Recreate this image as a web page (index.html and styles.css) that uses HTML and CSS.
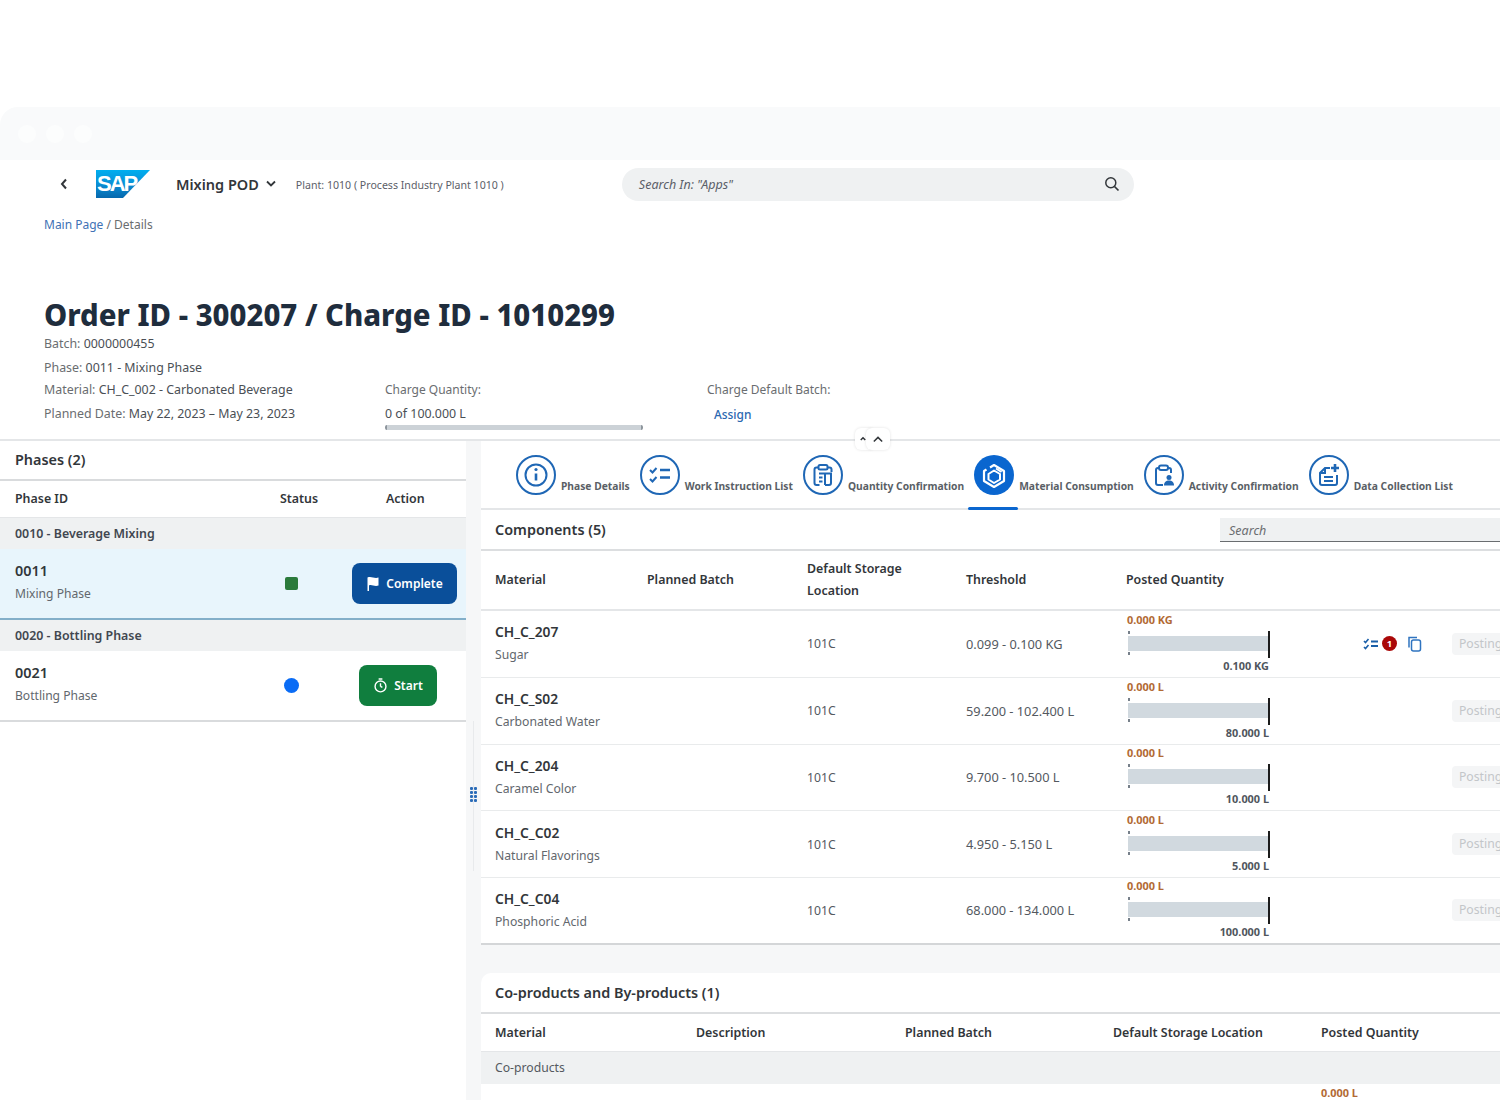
FILE: index.html
```html
<!DOCTYPE html>
<html lang="en">
<head>
<meta charset="utf-8">
<title>Mixing POD</title>
<link rel="stylesheet" href="styles.css">
</head>
<body>
<div class="page">
  <div class="top-space"></div>
  <div class="chrome"><i></i><i></i><i></i></div>
  <header class="shell">
    <svg class="back" viewBox="0 0 10 12" width="10" height="12"><path d="M7 1.500 3 6l4 4.500" fill="none" stroke="#32363a" stroke-width="2"/></svg>
    <svg class="logo" viewBox="0 0 54 28" width="54" height="28"><defs><linearGradient id="sapg" x1="0" y1="0" x2="0" y2="1"><stop offset="0" stop-color="#00aeef"/><stop offset=".5" stop-color="#0a8fd6"/><stop offset="1" stop-color="#0668ad"/></linearGradient></defs><path d="M0 0h54L27 28H0z" fill="url(#sapg)"/><text x="1" y="21" class="logo-text">SAP</text></svg>
    <div class="app-title">Mixing POD</div>
    <svg class="caret" viewBox="0 0 10 8" width="10" height="8"><path d="M1 1.500 5 5.500l4-4" fill="none" stroke="#32363a" stroke-width="1.800"/></svg>
    <div class="plant">Plant: 1010 ( Process Industry Plant 1010 )</div>
    <div class="shell-search">
      <span>Search In: "Apps"</span>
      <svg viewBox="0 0 16 16" width="16" height="16"><circle cx="6.800" cy="6.800" r="5" fill="none" stroke="#32363a" stroke-width="1.500"/><path d="m10.500 10.500 4 4" stroke="#32363a" stroke-width="1.700"/></svg>
    </div>
  </header>
  <nav class="crumbs"><a>Main Page</a> / Details</nav>
  <section class="object">
    <h1>Order ID - 300207 / Charge ID - 1010299</h1>
    <div class="meta batch"><span>Batch:</span> 0000000455</div>
    <div class="meta phase"><span>Phase:</span> 0011 - Mixing Phase</div>
    <div class="meta-grid">
      <div class="meta"><span>Material:</span> CH_C_002 - Carbonated Beverage</div>
      <div class="meta label"><span>Charge Quantity:</span></div>
      <div class="meta label"><span>Charge Default Batch:</span></div>
      <div class="meta"><span>Planned Date:</span> May 22, 2023 – May 23, 2023</div>
      <div class="meta qty">0 of 100.000 L<div class="qty-bar"></div></div>
      <div class="meta assign"><a>Assign</a></div>
    </div>
  </section>
  <div class="collapse">
    <span class="mini"><svg viewBox="0 0 8 6" width="6" height="5"><path d="M1 5l3-3 3 3" fill="none" stroke="#32363a" stroke-width="2"/></svg></span>
    <span class="mini front"><svg viewBox="0 0 12 8" width="10" height="7"><path d="M1 6.500l5-5 5 5" fill="none" stroke="#32363a" stroke-width="1.800"/></svg></span>
  </div>
  <main class="workspace">
    <aside class="phases">
      <div class="panel-title">Phases (2)</div>
      <div class="ph-head"><span>Phase ID</span><span>Status</span><span>Action</span></div>
      <div class="ph-group">0010 - Beverage Mixing</div>
      <div class="ph-row selected">
        <div class="ph-name"><b>0011</b><small>Mixing Phase</small></div>
        <i class="ind green"></i>
        <button class="btn blue"><svg viewBox="0 0 14 16" width="14" height="16"><path d="M1.500 1.500c4-1.500 7 1.500 11 0v8c-4 1.500-7-1.500-9.500 0V15H1.500z" fill="#fff"/></svg>Complete</button>
      </div>
      <div class="ph-group">0020 - Bottling Phase</div>
      <div class="ph-row">
        <div class="ph-name"><b>0021</b><small>Bottling Phase</small></div>
        <i class="ind dot"></i>
        <button class="btn start"><svg viewBox="0 0 16 16" width="15" height="15"><circle cx="8" cy="9" r="5.800" fill="none" stroke="#fff" stroke-width="1.500"/><path d="M6 1h4M8 9V5.500M8 9l2 1" stroke="#fff" stroke-width="1.500" fill="none"/></svg>Start</button>
      </div>
    </aside>
    <div class="splitter"><div class="grip"><i></i><i></i><i></i><i></i><i></i><i></i><i></i><i></i></div></div>
    <div class="detail">
      <div class="tabs">
        <div class="tab"><svg viewBox="0 0 40 40" width="40" height="40"><circle cx="20" cy="20" r="19" class="ring"/><circle cx="20" cy="20" r="10.500" class="ln thick"/><path d="M20 18.500v7" class="ln thicker"/><circle cx="20" cy="14.500" r="1.600" fill="#1f67b5"/></svg><span>Phase Details</span></div>
        <div class="tab"><svg viewBox="0 0 40 40" width="40" height="40"><circle cx="20" cy="20" r="19" class="ring"/><path d="m10 15 2.500 2.500 4-4.500M10 24l2.500 2.500 4-4.500" class="ln thick"/><path d="M20 15h10M20 22.500h10" class="ln thicker"/></svg><span>Work Instruction List</span></div>
        <div class="tab"><svg viewBox="0 0 40 40" width="40" height="40"><circle cx="20" cy="20" r="19" class="ring"/><path d="M15 12.500h-1.500a2 2 0 0 0-2 2V28a2 2 0 0 0 2 2h3M25 12.500h1.500a2 2 0 0 1 2 2v2.500" class="ln thick"/><rect x="15.500" y="10" width="9" height="4.500" rx="1.500" class="ln thick"/><path d="M16 18.500h13M16 22.500h3.500M16 26.500h3.500M22 18.500V30M28 18.500V28a2 2 0 0 1-2 2h-4" class="ln thick"/></svg><span>Quantity Confirmation</span></div>
        <div class="tab active"><svg viewBox="0 0 40 40" width="40" height="40"><circle cx="20" cy="20" r="20" fill="#0a66cf"/><path d="M16 12.500 20 10l10 6v10l-10 6-10-6v-10l2.500-1.500" fill="none" stroke="#fff" stroke-width="2.200" stroke-linejoin="round"/><path d="M20 15.500 26 19v5.500l-6 3.500-5.500-3.500V19zM22 13.500l5.500 3.500" fill="none" stroke="#fff" stroke-width="2" stroke-linejoin="round"/></svg><span>Material Consumption</span></div>
        <div class="tab"><svg viewBox="0 0 40 40" width="40" height="40"><circle cx="20" cy="20" r="19" class="ring"/><path d="M15 13h-1a2 2 0 0 0-2 2v13a2 2 0 0 0 2 2h5M24 13h1a2 2 0 0 1 2 2v3" class="ln thick"/><rect x="15" y="10.500" width="9" height="4.500" rx="2" class="ln thick"/><circle cx="25" cy="22.500" r="2.500" fill="#1f67b5"/><path d="M20 30.500c0-3.500 2-5 5-5s5 1.500 5 5z" fill="#1f67b5"/></svg><span>Activity Confirmation</span></div>
        <div class="tab"><svg viewBox="0 0 40 40" width="40" height="40"><circle cx="20" cy="20" r="19" class="ring"/><path d="M21 13h-5l-5 5v10a2 2 0 0 0 2 2h13a2 2 0 0 0 2-2V20" class="ln thick"/><path d="M16 13v5h-5" class="ln thick"/><path d="M15 22h9M15 26h9" class="ln thick"/><path d="M26 9v8M22 13h8" class="ln thicker"/></svg><span>Data Collection List</span></div>
      </div>
      <div class="cmp-title"><h2>Components (5)</h2><div class="search">Search</div></div>
      <div class="cmp-head"><span>Material</span><span>Planned Batch</span><span>Default Storage<br>Location</span><span>Threshold</span><span>Posted Quantity</span></div>
      <div class="cmp-row">
        <div class="name"><b>CH_C_207</b><small>Sugar</small></div><div></div><div>101C</div><div class="range">0.099 - 0.100 KG</div>
        <div class="posted"><em>0.000 KG</em><div class="bar"></div><strong>0.100 KG</strong></div>
        <div class="tools">
          <svg viewBox="0 0 16 12" width="16" height="12"><path d="m1 3 1.500 1.500L5.500 1M1 9l1.500 1.500L5.500 7" class="ln2"/><path d="M8 3.500h7M8 8h7" class="ln2 wide"/></svg>
          <i class="badge">1</i>
          <svg class="copy" viewBox="0 0 16 16" width="16" height="16"><path d="M3 11.500V1.500h8" class="ln2 soft"/><rect x="5.500" y="4" width="9" height="11" rx="2" class="ln2 soft"/></svg>
        </div>
        <div class="post">Posting</div>
      </div>
      <div class="cmp-row">
        <div class="name"><b>CH_C_S02</b><small>Carbonated Water</small></div><div></div><div>101C</div><div class="range">59.200 - 102.400 L</div>
        <div class="posted"><em>0.000 L</em><div class="bar"></div><strong>80.000 L</strong></div>
        <div class="tools"></div><div class="post">Posting</div>
      </div>
      <div class="cmp-row">
        <div class="name"><b>CH_C_204</b><small>Caramel Color</small></div><div></div><div>101C</div><div class="range">9.700 - 10.500 L</div>
        <div class="posted"><em>0.000 L</em><div class="bar"></div><strong>10.000 L</strong></div>
        <div class="tools"></div><div class="post">Posting</div>
      </div>
      <div class="cmp-row">
        <div class="name"><b>CH_C_C02</b><small>Natural Flavorings</small></div><div></div><div>101C</div><div class="range">4.950 - 5.150 L</div>
        <div class="posted"><em>0.000 L</em><div class="bar"></div><strong>5.000 L</strong></div>
        <div class="tools"></div><div class="post">Posting</div>
      </div>
      <div class="cmp-row last">
        <div class="name"><b>CH_C_C04</b><small>Phosphoric Acid</small></div><div></div><div>101C</div><div class="range">68.000 - 134.000 L</div>
        <div class="posted"><em>0.000 L</em><div class="bar"></div><strong>100.000 L</strong></div>
        <div class="tools"></div><div class="post">Posting</div>
      </div>
      <div class="coprod">
        <h2>Co-products and By-products (1)</h2>
        <div class="co-head"><span>Material</span><span>Description</span><span>Planned Batch</span><span>Default Storage Location</span><span>Posted Quantity</span></div>
        <div class="co-group">Co-products</div>
        <div class="co-row"><em>0.000 L</em></div>
      </div>
    </div>
  </main>
</div>
</body>
</html>
```
FILE: styles.css
```css
* { box-sizing: border-box; }
html, body { margin: 0; height: 1100px; overflow: hidden; background: #fff; }
body { font-family: "Noto Sans", "Open Sans", sans-serif; color: #32363a; font-size: 12.500px; }
.page { width: 1500px; height: 1100px; overflow: hidden; position: relative; }
.top-space { height: 107px; }
.chrome { height: 53px; background: #f9fafb; border-top-left-radius: 18px; display: flex; align-items: center; gap: 10px; padding-left: 18px; }
.chrome i { width: 18px; height: 18px; border-radius: 50%; background: #fcfdfd; }

.shell { height: 48px; display: flex; align-items: center; padding-left: 59px; }
.back { margin-right: 27px; }
.logo { margin-right: 26px; }
.logo-text { font: bold 22px "Liberation Sans", sans-serif; fill: #fff; letter-spacing: -2px; }
.app-title { font-size: 14.500px; font-weight: 600; color: #32363a; }
.caret { margin: 0 21px 0 7px; }
.plant { font-size: 10.600px; color: #5b6068; width: 326px; padding-top: 1px; margin-left: -1px; }
.shell-search { width: 512px; height: 33px; border-radius: 17px; background: #eff1f2; display: flex; align-items: center; justify-content: space-between; padding: 0 14px 0 17px; font-style: italic; color: #5b6068; font-size: 12.500px; }

.crumbs { padding-left: 44px; height: 34px; line-height: 34px; font-size: 12px; color: #6a6d70; }
.crumbs a { color: #3f72b5; }

.object { padding: 53px 0 0 44px; height: 197px; }
h1 { margin: 0 0 -4px; font-size: 29.300px; line-height: 40px; font-weight: 800; color: #1f2d3d; height: 40px; }
.meta { font-size: 12.400px; line-height: 23px; color: #4a4f55; }
.meta span { color: #6a6d70; }
.meta.label { font-size: 12px; }
.batch { margin-top: 1px; height: 24px; }
.phase { height: 22px; }
.meta-grid { display: grid; grid-template-columns: 341px 322px 1fr; grid-auto-rows: 24px; }
.qty-bar { width: 258px; height: 5px; background: #ccd2d7; border-radius: 2px; border-left: 2px solid #8d959c; border-right: 2px solid #8d959c; }
.assign { padding-left: 7px; padding-top: 1px; }
.assign a { color: #2a67b0; font-weight: 500; font-size: 11.900px; }

.collapse { position: absolute; left: 855px; top: 428px; display: flex; z-index: 2; }
.mini { width: 20px; height: 22px; background: #fff; border-radius: 6px; display: flex; align-items: center; justify-content: center; box-shadow: 0 0 3px rgba(0,0,0,.12); }
.mini:first-child { margin-right: -9px; align-items: flex-start; padding-top: 8px; padding-right: 5px; }
.mini.front { position: relative; width: 24px; }

.workspace { display: flex; height: 661px; background: #f6f7f8; border-top: 2px solid #e4e6e8; overflow: hidden; }
.phases { width: 466px; flex: none; background: #fff; height: 100%; }
.panel-title { height: 40px; line-height: 38px; padding-left: 15px; font-size: 14.400px; font-weight: 600; border-bottom: 2px solid #d9dbdd; }
.ph-head { height: 37px; display: grid; grid-template-columns: 265px 106px 1fr; padding: 0 0 2px 15px; align-items: center; font-size: 12.400px; font-weight: 600; border-bottom: 1px solid #e4e6e8; }
.ph-group { height: 31px; line-height: 31px; padding-left: 15px; font-size: 12.400px; font-weight: 600; color: #414750; background: #eff1f2; }
.ph-row { height: 71px; display: grid; grid-template-columns: 270px 67px 1fr; padding: 0 9px 0 15px; align-items: center; background: #fff; border-bottom: 2px solid #d9dbdd; }
.ph-row.selected { background: #e8f5fc; border-bottom-color: #83afc9; }
.ph-name { margin-bottom: 2px; }
.ph-row b { display: block; font-size: 14.400px; font-weight: 600; line-height: 22px; }
.ph-row small { display: block; font-size: 12.100px; line-height: 22px; margin-top: 1px; color: #62676d; }
.ind { display: block; width: 13px; height: 13px; }
.ind.green { background: #2b7a3b; border-radius: 2px; }
.ind.dot { background: #0a6cf5; border-radius: 50%; width: 15px; height: 15px; margin-left: -1px; }
.btn { border: 0; display: inline-flex; align-items: center; justify-content: center; gap: 6px; height: 41px; border-radius: 8px; color: #fff; font: 600 12px "Noto Sans", sans-serif; }
.btn.blue { width: 105px; background: #0a4f9a; }
.btn.start { width: 78px; background: #107e3e; margin-left: 7px; }

.splitter { width: 15px; flex: none; height: 100%; position: relative; }
.splitter::before { content: ""; position: absolute; left: 7px; top: 280px; height: 150px; width: 1px; background: #e8eaec; }
.grip { position: absolute; left: 4px; top: 346px; width: 7px; display: grid; grid-template-columns: 3px 3px; gap: 1px; }
.grip i { width: 3px; height: 3px; background: #2b6cb8; border-radius: 1px; }

.detail { width: 1019px; flex: none; background: #f6f7f8; }
.tabs { height: 69px; background: #fff; display: flex; gap: 10px; padding: 14px 0 0 35px; border-bottom: 2px solid #e4e6e8; }
.tab { display: flex; align-items: flex-start; gap: 5px; height: 40px; position: relative; }
.tab span { font-size: 10.270px; font-weight: 700; color: #5a5f66; line-height: 13px; margin-top: 25px; white-space: nowrap; }
.tab svg { flex: none; }
.tab.active::after { content: ""; position: absolute; left: -6px; width: 50px; top: 52px; height: 3px; background: #0a66cf; border-radius: 2px; }
.ring { fill: none; stroke: #1f67b5; stroke-width: 2; }
.ln { fill: none; stroke: #1f67b5; stroke-width: 1.500; }
.thick { stroke-width: 2; }
.thicker { stroke-width: 2.600; }
.ln2 { fill: none; stroke: #1a5fa8; stroke-width: 1.600; }
.wide { stroke-width: 2; }
.soft { stroke: #2f74c0; stroke-width: 1.500; }

.cmp-title { height: 41px; background: #fff; border-bottom: 2px solid #dcdee0; display: flex; align-items: center; justify-content: space-between; padding-left: 14px; }
h2 { margin: 0; font-size: 14.400px; font-weight: 600; color: #32363a; }
.search { width: 280px; height: 24px; margin-top: 1px; background: #eff1f2; border-bottom: 1px solid #6a6d70; padding-left: 9px; line-height: 25px; font-style: italic; color: #6a6d70; font-size: 12.500px; }
.cmp-head, .cmp-row { display: grid; grid-template-columns: 152px 160px 159px 160px 236px 90px 60px; padding-left: 14px; background: #fff; align-items: center; }
.cmp-head { height: 60px; font-size: 12.400px; font-weight: 600; line-height: 22px; border-bottom: 2px solid #e4e6e8; }
.cmp-row { height: 66.750px; font-size: 12.200px; color: #54595f; border-bottom: 1px solid #e9ebec; overflow: hidden; }
.cmp-row.last { border-bottom: 2px solid #d4d6d8; }
.range { font-size: 12.800px; }
.name b { display: block; font-size: 13.800px; font-weight: 600; line-height: 22px; color: #32363a; }
.name small { display: block; font-size: 12.200px; line-height: 22px; margin-top: 1px; color: #62676d; }
.posted { width: 144px; position: relative; height: 62px; }
.posted em, .co-row em { font-style: normal; font-weight: 700; font-size: 10.900px; color: #b26a34; }
.posted em { position: absolute; left: 1px; top: 0; line-height: 13px; }
.bar { position: absolute; left: 2px; right: 0; top: 23px; height: 15px; background: #d1d9df; }
.bar::after { content: ""; position: absolute; right: 0; top: -5px; height: 27px; width: 2px; background: #1c1c1c; }
.bar::before { content: ""; position: absolute; left: 0; top: -5px; height: 24px; width: 2px; background: linear-gradient(#77808a 3px, transparent 3px, transparent 21px, #77808a 21px); }
.posted strong { position: absolute; right: 1px; top: 46px; font-size: 10.900px; line-height: 13px; font-weight: 700; color: #50565d; }
.tools { display: flex; align-items: center; margin-left: 1px; }
.badge { width: 15px; height: 15px; margin-left: 3px; border-radius: 50%; background: #aa0808; color: #fff; font: 700 9.500px/15px "Noto Sans", sans-serif; text-align: center; }
.copy { margin-left: 9px; }
.post { width: 70px; height: 22px; line-height: 22px; padding-left: 7px; background: #f4f5f6; border-radius: 4px; color: #c3c6c9; font-size: 12.200px; }

.coprod { margin-top: 28px; background: #fff; border-top-left-radius: 10px; }
.coprod h2 { height: 41px; line-height: 40px; padding-left: 14px; border-bottom: 2px solid #dcdee0; }
.co-head { height: 38px; display: grid; grid-template-columns: 201px 209px 208px 208px 1fr; padding-left: 14px; align-items: center; font-size: 12.400px; font-weight: 600; border-bottom: 1px solid #e4e6e8; }
.co-group { height: 32px; line-height: 32px; padding-left: 14px; background: #eff1f2; font-size: 12.200px; color: #54595f; }
.co-row { padding: 2px 0 0 840px; line-height: 13px; height: 40px; }
```
